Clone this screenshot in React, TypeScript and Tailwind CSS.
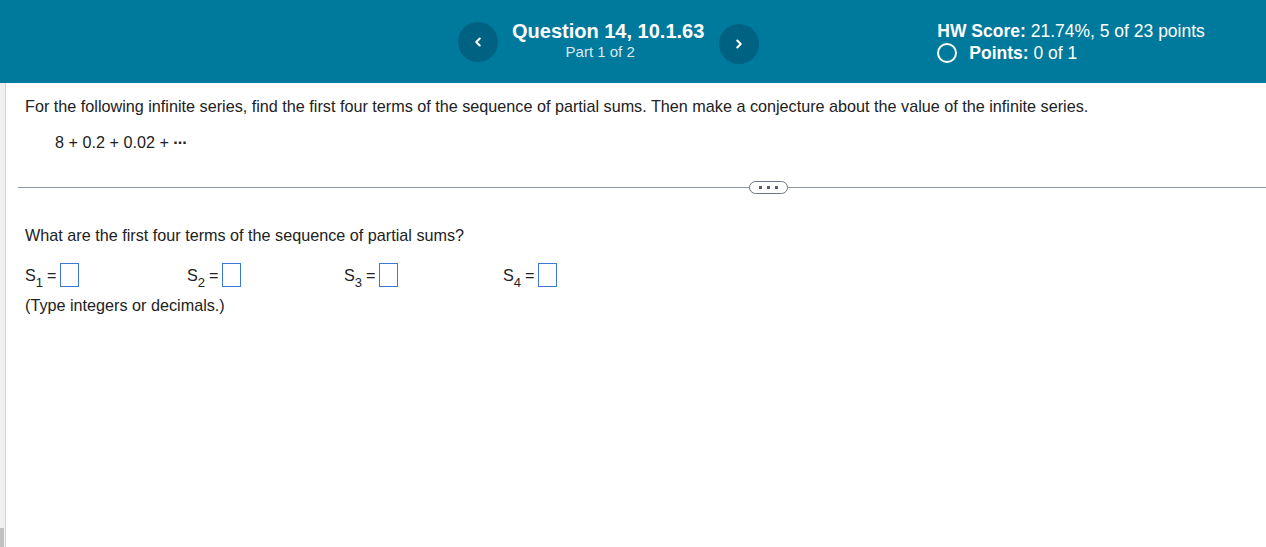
import { ChevronLeft, ChevronRight } from "lucide-react"

function Answer({ sub, className }: { sub: string; className: string }) {
  return (
    <div className={`flex items-center ${className}`}>
      <span>
        S<sub className="align-[-3px] text-[13px]">{sub}</sub>
      </span>
      <span className="ml-[4px]">=</span>
      <span className="ml-[3px] h-[24px] w-[19px] border border-[#3b78d8] bg-white" />
    </div>
  )
}

export default function App() {
  return (
    <div className="flex h-[547px] w-[1266px] flex-col overflow-hidden bg-white font-['Liberation_Sans',Arial,sans-serif] text-[#222]">
      <header className="flex h-[83px] shrink-0 items-start bg-[#007a9c] text-white">
        <div className="ml-[458px] mt-[22px] flex items-start">
          <button className="flex size-[40px] items-center justify-center rounded-full bg-[#006282]">
            <ChevronLeft className="size-[14px]" strokeWidth={3.5} />
          </button>
          <div className="ml-[14px] mt-[-4px] flex flex-col items-center">
            <div className="text-[20px] font-bold leading-[26px]">Question 14, 10.1.63</div>
            <div className="mr-[16px] mt-[-1px] text-[15px] leading-[18px] text-[#dbe9ef]">Part 1 of 2</div>
          </div>
          <button className="ml-[15px] mt-[2px] flex size-[40px] items-center justify-center rounded-full bg-[#006282]">
            <ChevronRight className="size-[14px]" strokeWidth={3.5} />
          </button>
        </div>
        <div className="ml-[178px] mt-[20px] flex flex-col text-[17.5px] leading-[22px]">
          <div>
            <span className="font-bold">HW Score:</span> 21.74%, 5 of 23 points
          </div>
          <div className="flex items-center">
            <span className="size-[20px] rounded-full border-[2.5px] border-white" />
            <span className="ml-[12px]">
              <span className="font-bold">Points:</span> 0 of 1
            </span>
          </div>
        </div>
      </header>

      <div className="flex flex-1">
        <div className="flex w-[6px] shrink-0 flex-col border-r border-[#cfd5de] bg-[#f0f0f0]">
          <div className="flex-1" />
          <div className="h-[19px] w-[4px] bg-[#c2c2c2]" />
        </div>

        <main className="flex flex-1 flex-col text-[16.2px]">
          <p className="ml-[19px] mt-[14px] leading-[18px]">
            For the following infinite series, find the first four terms of the sequence of partial sums. Then make a conjecture about the value of the infinite series.
          </p>
          <p className="ml-[49px] mt-[18px] leading-[18px]">
            8 + 0.2 + 0.02 + <span className="font-bold tracking-[-1px]">···</span>
          </p>

          <div className="ml-[12px] mt-[30px] flex items-center">
            <div className="h-px flex-1 bg-[#8d98a3]" />
            <button className="flex h-[13px] w-[39px] items-center justify-center gap-[5px] rounded-full border border-[#6b7684] bg-white">
              <span className="size-[3px] bg-[#555f6b]" />
              <span className="size-[3px] bg-[#555f6b]" />
              <span className="size-[3px] bg-[#555f6b]" />
            </button>
            <div className="h-px w-[478px] bg-[#8d98a3]" />
          </div>

          <p className="ml-[19px] mt-[32px] leading-[18px]">What are the first four terms of the sequence of partial sums?</p>
          <div className="ml-[19px] mt-[19px] flex items-center leading-[18px]">
            <Answer sub="1" className="w-[162px]" />
            <Answer sub="2" className="w-[157px]" />
            <Answer sub="3" className="w-[159px]" />
            <Answer sub="4" className="w-[160px]" />
          </div>
          <p className="ml-[19px] mt-[9px] leading-[18px]">(Type integers or decimals.)</p>
        </main>
      </div>
    </div>
  )
}
